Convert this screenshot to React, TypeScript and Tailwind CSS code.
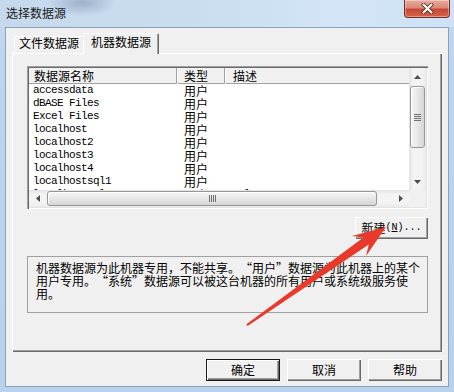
import React from "react";

const cjk = "font-['Noto_Sans_CJK_SC','Noto_Sans',sans-serif]";
const mono = "font-['Liberation_Mono','DejaVu_Sans_Mono',monospace]";

const raised =
  "shadow-[inset_1px_1px_0_#ffffff,inset_-1px_-1px_0_#696969,inset_-2px_-2px_0_#a0a0a0]";

const rows: [string, string, string][] = [
  ["accessdata", "用户", ""],
  ["dBASE Files", "用户", ""],
  ["Excel Files", "用户", ""],
  ["localhost", "用户", ""],
  ["localhost2", "用户", ""],
  ["localhost3", "用户", ""],
  ["localhost4", "用户", ""],
  ["localhostsql1", "用户", ""],
  ["localhostsql2", "用户", "sql server 2008 R2"],
];

const Tri = ({ dir }: { dir: "up" | "down" | "left" | "right" }) => {
  const vertical = dir === "up" || dir === "down";
  const pts = {
    up: "0,4 3.5,0 7,4",
    down: "0,0 7,0 3.5,4",
    left: "4,0 4,7 0,3.5",
    right: "0,0 4,3.5 0,7",
  }[dir];
  return (
    <svg
      width={vertical ? 7 : 4}
      height={vertical ? 4 : 7}
      viewBox={vertical ? "0 0 7 4" : "0 0 4 7"}
    >
      <polygon points={pts} fill="#4d4d4d" />
    </svg>
  );
};

// full-width quote marks, as the dialog font draws them
const Lq = () => <span className="inline-block w-[12px] text-right">“</span>;
const Rq = () => <span className="inline-block w-[12px] text-left">”</span>;

const CloseButton = () => (
  <div className="w-[46px] h-[18px] rounded-b-[4px] border border-t-0 border-[#7a2d22] bg-[linear-gradient(to_bottom,#e8ab9d,#dc8a78_45%,#c64a33_55%,#d4634a)] flex items-center justify-center shadow-[inset_0_0_0_1px_rgba(255,255,255,0.35)]">
    <svg width="13" height="11" viewBox="0 0 13 11">
      <path d="M2.5 1.5 L10.5 9.5 M10.5 1.5 L2.5 9.5" stroke="#4a2018" strokeWidth="3.8" strokeLinecap="round" />
      <path d="M2.5 1.5 L10.5 9.5 M10.5 1.5 L2.5 9.5" stroke="#ffffff" strokeWidth="2.2" strokeLinecap="round" />
    </svg>
  </div>
);

const ListView = () => (
  <div className="mt-[13px] ml-[15px] w-[401px] h-[143px] p-[2px] bg-white shadow-[inset_1px_1px_0_#a0a0a0,inset_2px_2px_0_#696969,inset_-1px_-1px_0_#ffffff,inset_-2px_-2px_0_#e3e3e3] grid grid-cols-[1fr_17px] grid-rows-[1fr_17px]">
    <div className="overflow-hidden">
      <div className="h-[16px] flex bg-[#f1f1f1] shadow-[inset_0_-1px_0_#a0a0a0] text-[12px] leading-[15px] text-black">
        <div className="w-[148px] pl-[5px] shadow-[inset_-1px_0_0_#a0a0a0]">数据源名称</div>
        <div className="w-[48px] pl-[7px] shadow-[inset_1px_0_0_#ffffff,inset_-1px_0_0_#a0a0a0]">类型</div>
        <div className="flex-1 pl-[8px] shadow-[inset_1px_0_0_#ffffff]">描述</div>
      </div>
      {rows.map(([name, type, desc]) => (
        <div key={name} className="h-[13px] flex leading-[13px] whitespace-nowrap text-black">
          <div className={`w-[148px] pl-[4px] text-[11px] tracking-[-0.6px] ${mono}`}>{name}</div>
          <div className="w-[48px] pl-[7px] text-[12px]">{type}</div>
          <div className={`flex-1 pl-[7px] text-[11px] tracking-[-0.6px] ${mono}`}>{desc}</div>
        </div>
      ))}
    </div>

    {/* vertical scrollbar */}
    <div className="flex flex-col bg-[linear-gradient(to_right,#e2e2e2,#f3f3f3_25%,#f3f3f3_75%,#eaeaea)]">
      <div className="h-[17px] flex items-center justify-center">
        <Tri dir="up" />
      </div>
      <div className="flex-1 px-[1px] pt-[1px]">
        <div className="h-[62px] rounded-[3px] border border-[#979797] bg-[linear-gradient(to_right,#f6f6f6,#e7e7e7_50%,#d5d5d5)] shadow-[inset_1px_1px_0_#ffffff] flex flex-col items-center justify-center gap-[1px]">
          <div className="w-[7px] h-[1px] bg-[#707070]" />
          <div className="w-[7px] h-[1px] bg-[#707070]" />
          <div className="w-[7px] h-[1px] bg-[#707070]" />
          <div className="w-[7px] h-[1px] bg-[#707070]" />
        </div>
      </div>
      <div className="h-[17px] flex items-center justify-center">
        <Tri dir="down" />
      </div>
    </div>

    {/* horizontal scrollbar */}
    <div className="flex bg-[linear-gradient(to_bottom,#e2e2e2,#f3f3f3_25%,#f3f3f3_75%,#eaeaea)]">
      <div className="w-[17px] flex items-center justify-center">
        <Tri dir="left" />
      </div>
      <div className="flex-1 py-[1px] pl-[1px]">
        <div className="w-[330px] h-full rounded-[3px] border border-[#979797] bg-[linear-gradient(to_bottom,#f6f6f6,#e7e7e7_50%,#d5d5d5)] shadow-[inset_1px_1px_0_#ffffff] flex items-center justify-center gap-[1px]">
          <div className="w-[1px] h-[7px] bg-[#707070]" />
          <div className="w-[1px] h-[7px] bg-[#707070]" />
          <div className="w-[1px] h-[7px] bg-[#707070]" />
          <div className="w-[1px] h-[7px] bg-[#707070]" />
        </div>
      </div>
      <div className="w-[17px] flex items-center justify-center">
        <Tri dir="right" />
      </div>
    </div>
    <div className="bg-[#f0f0f0]" />
  </div>
);

const Button = ({ label, isDefault }: { label: string; isDefault?: boolean }) => (
  <div
    className={`w-[74px] h-[22px] bg-[#f0f0f0] flex items-center justify-center text-[12px] leading-[14px] text-black ${
      isDefault
        ? "shadow-[inset_0_0_0_1px_#1a1a1a,inset_2px_2px_0_#ffffff,inset_-2px_-2px_0_#696969,inset_-3px_-3px_0_#a0a0a0]"
        : raised
    }`}
  >
    {label}
  </div>
);

export default function App() {
  return (
    <div
      className={`relative w-[454px] h-[392px] overflow-hidden flex flex-col bg-[linear-gradient(to_bottom,#c8dcf1,#bcd4ed_60px,#b9d1eb)] ${cjk}`}
    >
      {/* title bar */}
      <div className="h-[27px] flex items-start justify-between pl-[6px] pr-[4px] bg-[radial-gradient(ellipse_34px_13px_at_82px_3px,rgba(105,125,155,0.45),transparent),linear-gradient(to_right,#c6d8ec,#c9dcf0_40%,#d3e5f7_75%,#cfe2f5)]">
        <span className="mt-[6px] text-[12px] leading-[14px] text-[#1a1a1a]">选择数据源</span>
        <CloseButton />
      </div>

      {/* client area */}
      <div className="mx-[5px] h-[360px] border border-[#8da2ba] bg-[#f0f0f0] flex flex-col px-[6px] pt-[5px]">
        {/* tabs */}
        <div className="h-[20px] flex items-end pl-[2px]">
          <div className="w-[70px] h-[17px] bg-[#f0f0f0] rounded-t-[2px] shadow-[inset_1px_1px_0_#ffffff,inset_-1px_0_0_#696969] text-center text-[12px] leading-[14px] text-black">
            文件数据源
          </div>
          <div className="relative z-10 -ml-[1px] -mb-[1px] w-[76px] h-[21px] bg-[#f0f0f0] rounded-t-[2px] shadow-[inset_1px_1px_0_#ffffff,inset_-1px_0_0_#696969,inset_-2px_0_0_#a0a0a0] pt-[2px] text-center text-[12px] leading-[14px] text-black">
            机器数据源
          </div>
        </div>

        {/* tab panel */}
        <div className={`w-[430px] h-[299px] bg-[#f0f0f0] flex flex-col ${raised}`}>
          <ListView />

          <div
            className={`mt-[8px] mr-[14px] self-end w-[73px] h-[22px] bg-[#f0f0f0] flex items-center justify-center text-[12px] leading-[14px] text-black ${raised}`}
          >
            <span>新建</span>
            <span className={`text-[10px] ${mono}`}>
              (<span className="underline">N</span>)...
            </span>
          </div>

          <div className="mt-[17px] ml-[15px] w-[401px] h-[57px] border border-[#a0a0a0] pl-[8px] pt-[4px] text-[12px] leading-[13px] text-black whitespace-nowrap">
            机器数据源为此机器专用，不能共享。<Lq />用户<Rq />数据源为此机器上的某个
            <br />
            用户专用。<Lq />系统<Rq />数据源可以被这台机器的所有用户或系统级服务使
            <br />
            用。
          </div>
        </div>

        {/* dialog buttons */}
        <div className="mt-[7px] flex justify-end gap-[7px]">
          <Button label="确定" isDefault />
          <Button label="取消" />
          <Button label="帮助" />
        </div>
      </div>

      {/* red annotation arrow */}
      <svg className="absolute inset-0 pointer-events-none" width="454" height="392" viewBox="0 0 454 392">
        <polygon
          points="386,227 352,236 363.5,237.5 246.4,324.3 247.6,325.9 368.8,244.6 366,256"
          fill="#e9392b"
        />
      </svg>
    </div>
  );
}
